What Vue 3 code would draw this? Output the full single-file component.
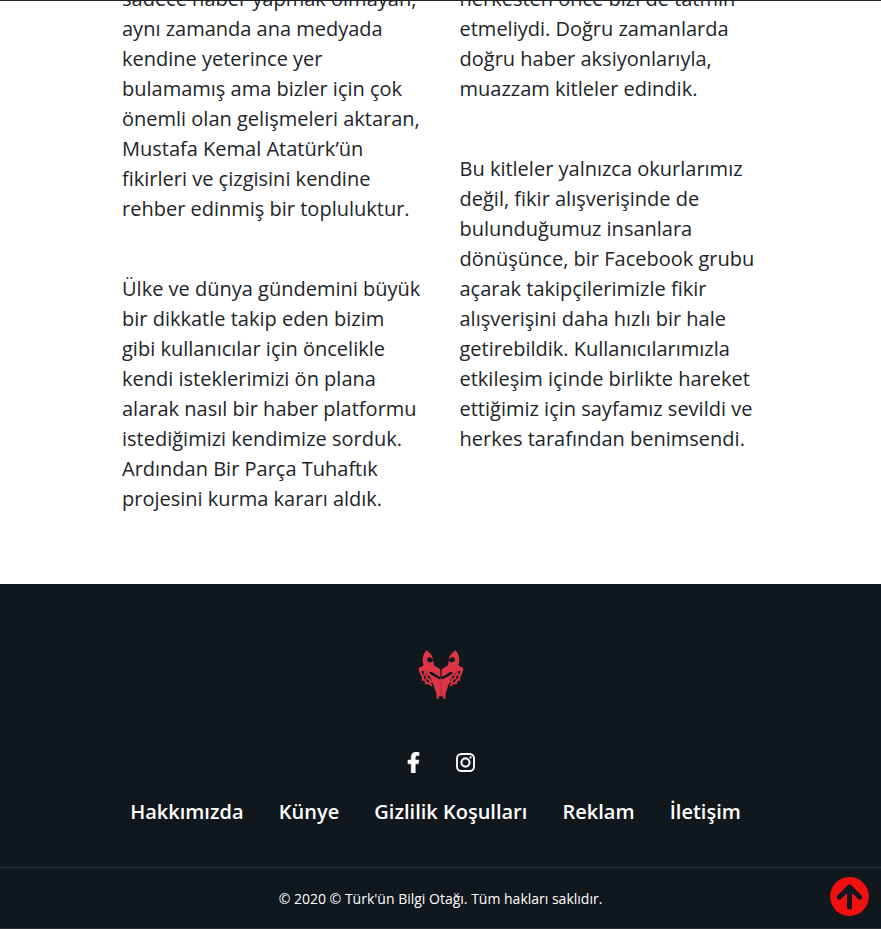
<script setup>
const columns = [
  [
    [
      'sadece haber yapmak olmayan,',
      'aynı zamanda ana medyada',
      'kendine yeterince yer',
      'bulamamış ama bizler için çok',
      'önemli olan gelişmeleri aktaran,',
      'Mustafa Kemal Atatürk’ün',
      'fikirleri ve çizgisini kendine',
      'rehber edinmiş bir topluluktur.',
    ],
    [
      'Ülke ve dünya gündemini büyük',
      'bir dikkatle takip eden bizim',
      'gibi kullanıcılar için öncelikle',
      'kendi isteklerimizi ön plana',
      'alarak nasıl bir haber platformu',
      'istediğimizi kendimize sorduk.',
      'Ardından Bir Parça Tuhaftık',
      'projesini kurma kararı aldık.',
    ],
  ],
  [
    [
      'herkesten önce bizi de tatmin',
      'etmeliydi. Doğru zamanlarda',
      'doğru haber aksiyonlarıyla,',
      'muazzam kitleler edindik.',
    ],
    [
      'Bu kitleler yalnızca okurlarımız',
      'değil, fikir alışverişinde de',
      'bulunduğumuz insanlara',
      'dönüşünce, bir Facebook grubu',
      'açarak takipçilerimizle fikir',
      'alışverişini daha hızlı bir hale',
      'getirebildik. Kullanıcılarımızla',
      'etkileşim içinde birlikte hareket',
      'ettiğimiz için sayfamız sevildi ve',
      'herkes tarafından benimsendi.',
    ],
  ],
]
const links = ['Hakkımızda', 'Künye', 'Gizlilik Koşulları', 'Reklam', 'İletişim']
</script>

<template>
  <div class="page">
    <main class="about">
      <div class="columns">
        <div v-for="(column, c) in columns" :key="c" class="column">
          <p v-for="(lines, p) in column" :key="p">{{ lines.join('\n') }}</p>
        </div>
      </div>
    </main>
    <footer class="footer">
      <div class="brand">
        <svg class="logo" viewBox="0 0 180 186" width="60" height="62">
          <defs>
            <g id="half">
              <path fill="#dc3545" d="M46 19 C56 25 65 34 66 48 C60 38 52 38 49 44 C47 51 52 55 60 55 L67 50 L69 64 L88 76 V99 L83 98 L62 84 L55 84 L60 92 L88 107 V157 L85 157 L82 166 L77 164 L76 148 L68 124 L58 100 L48 90 L40 82 L24 82 L23 72 L38 64 C32 48 35 33 46 19 Z" />
              <path fill="none" stroke="#dc3545" stroke-width="6" d="M27 80 L32 92 L36 98 L35 107 L43 109 L45 118 L55 118 L63 125 M42 84 L40 91 L48 95 L47 103 L55 105 L57 112 L65 115" />
              <path fill="none" stroke="#10171d" stroke-width="4" d="M55 85 L64 87 L84 100" />
            </g>
          </defs>
          <use href="#half" />
          <use href="#half" transform="translate(180 0) scale(-1 1)" />
          <path d="M90 103 V157" stroke="#dc3545" stroke-width="5" />
        </svg>
      </div>
      <div class="social">
        <svg class="facebook" viewBox="0 0 320 512" width="13" height="21" fill="#fff">
          <path d="M279.14 288l14.22-92.66h-88.91v-60.13c0-25.35 12.42-50.06 52.24-50.06h40.42V6.26S260.43 0 225.36 0c-73.22 0-121.08 44.38-121.08 124.72v70.62H22.89V288h81.39v224h100.17V288z" stroke="#fff" stroke-width="12" />
        </svg>
        <svg class="instagram" viewBox="0 0 448 448" width="19" height="19" fill="#fff">
          <path d="M224 109a115 115 0 1 0 0 230 115 115 0 0 0 0-230zm0 190a75 75 0 1 1 0-150 75 75 0 0 1 0 150z" stroke="#fff" stroke-width="8" />
          <circle cx="343" cy="105" r="27" />
          <rect x="23" y="23" width="402" height="402" rx="105" fill="none" stroke="#fff" stroke-width="44" />
        </svg>
      </div>
      <nav class="links">
        <a v-for="link in links" :key="link">{{ link }}</a>
      </nav>
      <div class="copyright">© 2020 © Türk'ün Bilgi Otağı. Tüm hakları saklıdır.</div>
    </footer>
    <button class="to-top" aria-label="Yukarı">
      <svg viewBox="0 0 39 39" width="39" height="39">
        <circle cx="19.5" cy="19.5" r="19.4" fill="#f11010" />
        <path d="M9.2 20.2 L19.5 10 L29.8 20.2 M19.5 11 V30" fill="none" stroke="#10171d" stroke-width="5" stroke-linecap="round" stroke-linejoin="round" />
      </svg>
    </button>
  </div>
</template>

<style>
body {
  margin: 0;
}
</style>

<style scoped>
.page {
  position: relative;
  height: 929px;
  overflow: hidden;
  box-sizing: border-box;
  background: #fff;
  font-family: 'Open Sans', sans-serif;
}
.about {
  height: 584px;
  box-sizing: border-box;
  border-top: 1px solid #212529;
  overflow: hidden;
}
.columns {
  display: grid;
  grid-template-columns: 337.5px 337.5px;
  margin: -17px 0 0 122px;
}
p {
  margin: 0 0 50px;
  font-size: 20px;
  line-height: 30px;
  font-weight: 400;
  color: #212529;
  white-space: pre;
}
.footer {
  height: 345px;
  box-sizing: border-box;
  background: #10171d;
  border-bottom: 1px solid #2a2f33;
  color: #fff;
}
.brand {
  display: flex;
  justify-content: center;
  padding-top: 60px;
}
.logo {
  display: block;
}
.social {
  display: flex;
  justify-content: center;
  align-items: center;
  gap: 36px;
  height: 21px;
  margin-top: 46px;
  padding-left: 1px;
}
.links {
  display: flex;
  justify-content: center;
  gap: 35.2px;
  margin: 24px 0 0;
  padding-right: 10px;
  height: 70px;
  font-size: 20px;
  line-height: 30px;
  font-weight: 600;
  white-space: nowrap;
}
.copyright {
  border-top: 1px solid #2d3236;
  padding-top: 20px;
  text-align: center;
  font-size: 14px;
  line-height: 21px;
}
.to-top {
  position: absolute;
  right: 12px;
  bottom: 13px;
  padding: 0;
  border: 0;
  background: none;
}
.to-top svg {
  display: block;
}
</style>
